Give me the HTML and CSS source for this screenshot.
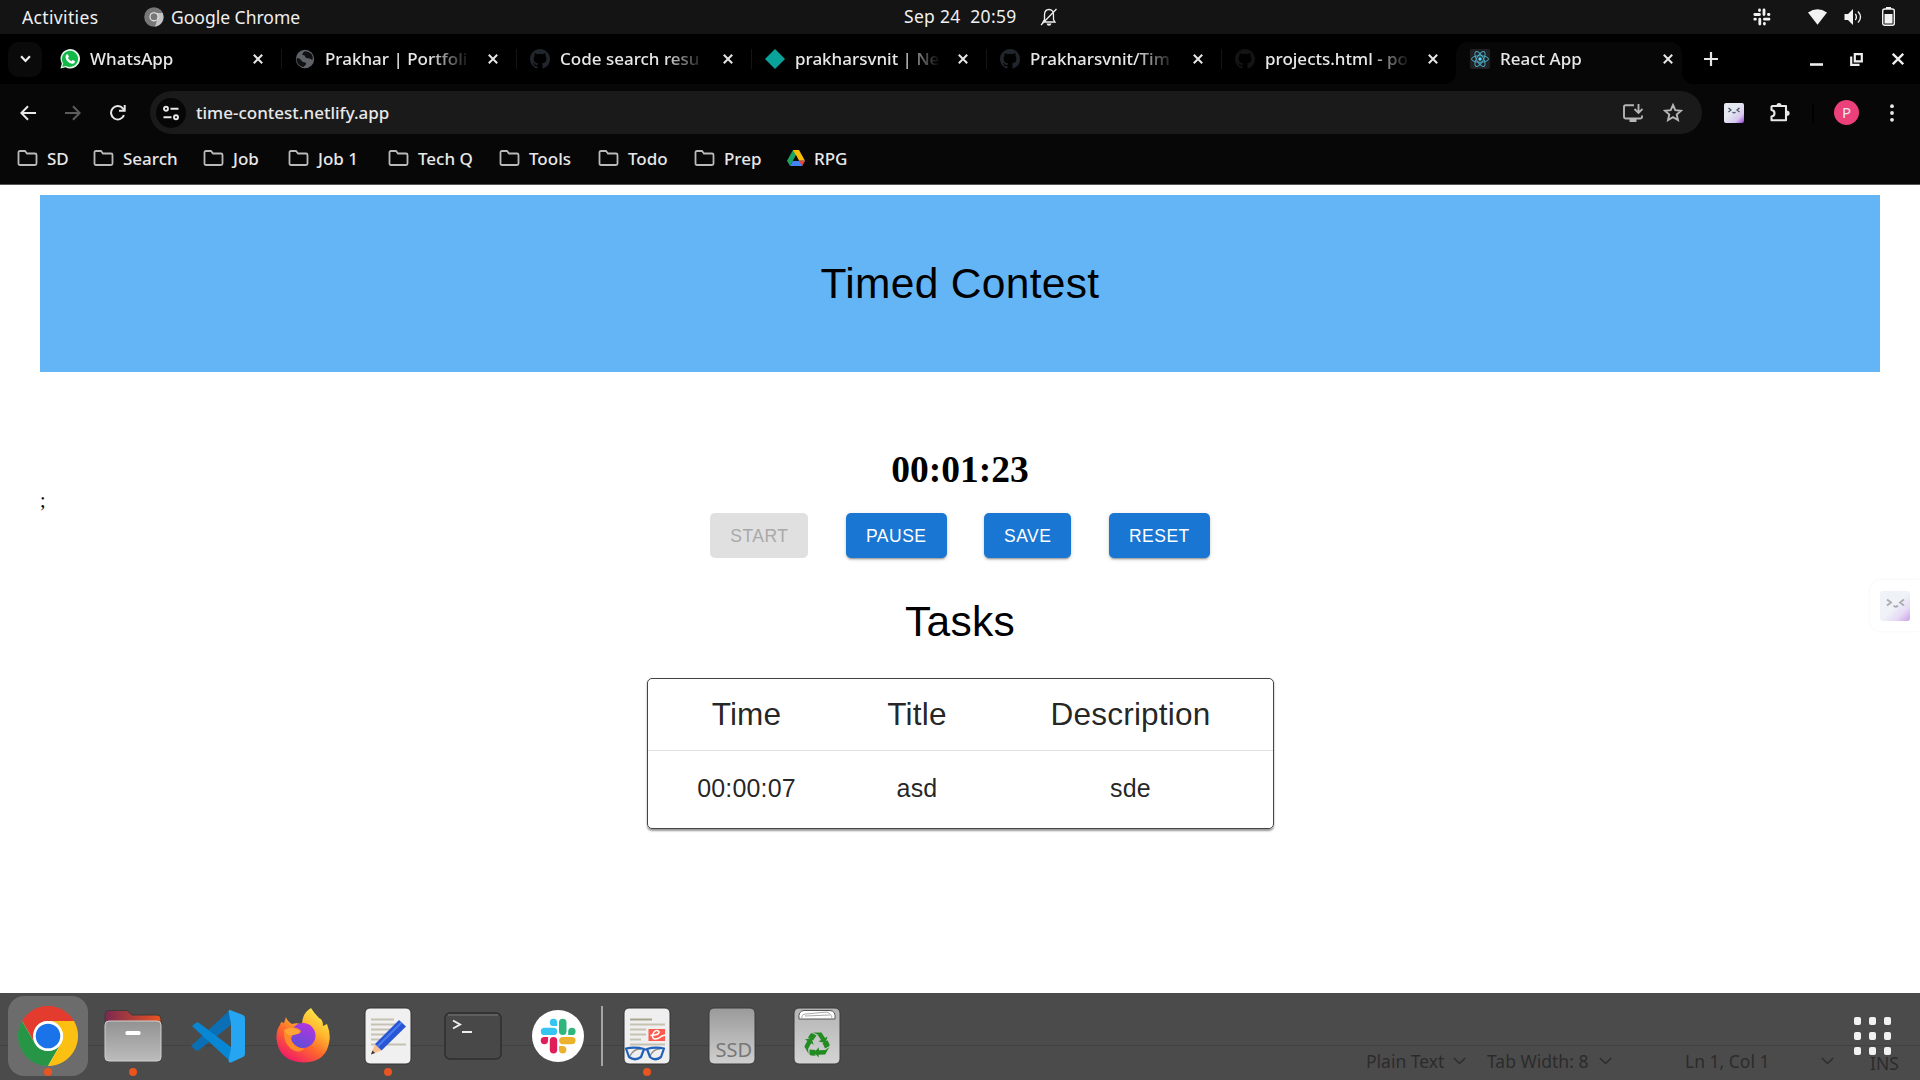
FILE: index.html
```html
<!DOCTYPE html>
<html lang="en">
<head>
<meta charset="utf-8">
<title>React App</title>
<link rel="stylesheet" href="styles.css">
</head>
<body>
<svg class="defs" width="0" height="0">
  <defs>
    <linearGradient id="g-kitty" x1="0" y1="0" x2="1" y2="1"><stop offset=".4" stop-color="#e4e9f2"/><stop offset=".75" stop-color="#d9c8ee"/><stop offset="1" stop-color="#8e3fd6"/></linearGradient>
    <linearGradient id="g-folder" x1="0" y1="0" x2="1" y2="0"><stop offset="0" stop-color="#7a2950"/><stop offset="1" stop-color="#e95420"/></linearGradient>
    <linearGradient id="g-grey" x1="0" y1="0" x2="0" y2="1"><stop offset="0" stop-color="#929292"/><stop offset="1" stop-color="#bcbcbc"/></linearGradient>
    <linearGradient id="g-ssd" x1="0" y1="0" x2="0" y2="1"><stop offset="0" stop-color="#9a9a9a"/><stop offset="1" stop-color="#d0d0d0"/></linearGradient>
    <linearGradient id="g-trash" x1="0" y1="0" x2="0" y2="1"><stop offset="0" stop-color="#b4b4b4"/><stop offset="1" stop-color="#d4d4d4"/></linearGradient>
    <linearGradient id="g-fox" x1=".85" y1="0" x2=".2" y2="1"><stop offset="0" stop-color="#fff44f"/><stop offset=".35" stop-color="#ffb52e"/><stop offset=".6" stop-color="#ff6a2b"/><stop offset="1" stop-color="#f0106f"/></linearGradient>
    <linearGradient id="g-globe" x1=".8" y1="0" x2=".3" y2="1"><stop offset="0" stop-color="#b833e1"/><stop offset="1" stop-color="#5b4fd6"/></linearGradient>
    <symbol id="close" viewBox="0 0 10 10"><path d="M.8.8 9.2 9.2M9.2.8.8 9.2" stroke="#e6e6e6" stroke-width="2" fill="none"/></symbol>
    <symbol id="folder" viewBox="0 0 20 16"><path d="M1 13V2.500Q1 1 2.500 1H7.500L9.500 3.500H17.500Q19 3.500 19 5V13.500Q19 15 17.500 15H2.500Q1 15 1 13.500Z" fill="none" stroke="#b9b9b9" stroke-width="1.800"/></symbol>
    <symbol id="github" viewBox="0 0 16 16"><path d="M8 0C3.580 0 0 3.580 0 8c0 3.540 2.290 6.530 5.470 7.590.4.070.55-.17.55-.38v-1.490c-2.230.48-2.690-.95-2.690-.95-.36-.92-.89-1.170-.89-1.170-.73-.5.050-.49.050-.49.810.060 1.230.83 1.230.83.720 1.230 1.880.87 2.340.67.070-.52.280-.87.510-1.070-1.780-.2-3.640-.89-3.640-3.950 0-.87.310-1.590.820-2.150-.080-.2-.36-1.020.080-2.120 0 0 .67-.21 2.200.82a7.600 7.600 0 0 1 4 0c1.530-1.040 2.200-.82 2.200-.82.440 1.100.160 1.920.080 2.120.510.56.820 1.270.820 2.150 0 3.070-1.870 3.750-3.650 3.950.29.250.54.730.54 1.480v2.190c0 .21.150.46.550.38A8 8 0 0 0 16 8c0-4.420-3.580-8-8-8z"/></symbol>
    <symbol id="chev" viewBox="0 0 13 8"><path d="M.8 1 6.500 6.500 12.200 1" fill="none" stroke="#2c2c2c" stroke-width="1.400"/></symbol>
    <symbol id="arrow-seg" viewBox="0 0 60 60" overflow="visible"><path d="M26 26.500H34.500L38 32 40.500 30.500 38.500 37 31.500 35.500 34 34 30.500 28.500ZM25 27 29.500 29.500 26 34.500 21 31.500 23.500 27.800Z"/></symbol>
  </defs>
</svg>

<header class="topbar">
  <span class="activities">Activities</span>
  <svg class="tb-chrome" viewBox="0 0 20 20"><circle cx="10" cy="10" r="9.800" fill="#777"/><path d="M10 6H18.500A9.800 9.800 0 0 1 11 19.700L13.500 12Z" fill="#c4c4c4"/><circle cx="10" cy="9.800" r="4.600" fill="#ededed"/><circle cx="10" cy="9.800" r="3.500" fill="#777"/></svg>
  <span class="app-name">Google Chrome</span>
  <span class="clock">Sep 24&nbsp; 20:59</span>
  <svg class="bell" viewBox="0 0 18 18"><path d="M3 14H15L13.500 11.500V7C13.500 3.500 12 1.500 9 1.500S4.500 3.500 4.500 7V11.500ZM1 17 16.500 1" fill="none" stroke="#eee" stroke-width="1.300"/><path d="M6.500 15.500h5q-.5 2.200-2.500 2.200t-2.500-2.200Z" fill="#eee"/></svg>
  <svg class="st-slack" viewBox="0 0 18 18"><g stroke="#f2f2f2" stroke-width="2.800" stroke-linecap="round"><path d="M6.500 2V2.600M1.800 6.500H6.500M11 1.800V6.500M15.400 6.500H16M11.400 11.200H16M11.400 15.500V16M6.800 11.200V16M1.800 11.200H2.400"/></g></svg>
  <svg class="st-wifi" viewBox="0 0 19 16"><path d="M0 3.500Q9.500-3 19 3.500L9.500 15.800Z" fill="#f2f2f2"/></svg>
  <svg class="st-vol" viewBox="0 0 18 18"><path d="M0 6H3.500L8.500 1V17L3.500 12H0Z" fill="#f2f2f2"/><path d="M10.800 6Q13 9 10.800 12M13.500 3.500Q18.500 9 13.500 14.500" fill="none" stroke="#f2f2f2" stroke-width="1.300"/></svg>
  <svg class="st-bat" viewBox="0 0 13 19"><rect x=".7" y="2" width="11.600" height="16.300" rx="2" fill="none" stroke="#f2f2f2" stroke-width="1.400"/><path d="M4 0H9V2H4ZM2.500 7H10.500V16.500H2.500Z" fill="#f2f2f2"/></svg>
</header>

<section class="browser">
  <div class="tabstrip">
    <div class="tab-search"><svg viewBox="0 0 10 7"><path d="M1 1 5 5.300 9 1" fill="none" stroke="#eee" stroke-width="2"/></svg></div>
    <div class="tab"><svg class="fav" viewBox="0 0 20 20"><path d="M.5 19.500 1.800 14.500A9.700 9.700 0 1 1 5.500 18.200Z" fill="#e8f7ec"/><path d="M2.200 17.800 3.200 14.300A8.100 8.100 0 1 1 6 16.900Z" fill="#12b848"/><path d="M6.500 5.500Q7.600 4.600 8.200 6L8.900 7.700 7.900 9Q9.200 11.300 11.500 12.200L12.700 11 15 12.200Q14.800 15 12 14.700 6.500 13.500 5.500 8.200 5.500 6.500 6.500 5.500Z" fill="#fff"/></svg><span class="title">WhatsApp</span><svg class="x"><use href="#close"/></svg></div>
    <div class="tab sep"><svg class="fav" viewBox="0 0 20 20"><circle cx="10" cy="10" r="9.200" fill="#5f6368"/><path d="M2 9Q5 9 6 11T10 13.500 8.500 18Q2.500 17 1.500 11ZM9 2.500Q13 1.500 16.500 5 18.500 8 17.500 11L14.500 9.500 11 9 9.500 6.500 7 5.500Z" fill="#101112"/></svg><span class="title">Prakhar | Portfoli</span><svg class="x"><use href="#close"/></svg></div>
    <div class="tab sep"><svg class="fav gh"><use href="#github"/></svg><span class="title">Code search resu</span><svg class="x"><use href="#close"/></svg></div>
    <div class="tab sep"><svg class="fav" viewBox="0 0 20 20"><path d="M10 0 20 10 10 20 0 10Z" fill="#0aa39c"/></svg><span class="title">prakharsvnit | Ne</span><svg class="x"><use href="#close"/></svg></div>
    <div class="tab sep"><svg class="fav gh"><use href="#github"/></svg><span class="title">Prakharsvnit/Tim</span><svg class="x"><use href="#close"/></svg></div>
    <div class="tab sep"><svg class="fav gh dim"><use href="#github"/></svg><span class="title">projects.html - po</span><svg class="x"><use href="#close"/></svg></div>
    <div class="tab active"><svg class="fav" viewBox="0 0 20 20"><rect width="20" height="20" rx="2" fill="#202124"/><g fill="none" stroke="#4ba9c0" stroke-width="1"><ellipse cx="10" cy="10" rx="8.500" ry="3.300"/><ellipse cx="10" cy="10" rx="8.500" ry="3.300" transform="rotate(60 10 10)"/><ellipse cx="10" cy="10" rx="8.500" ry="3.300" transform="rotate(120 10 10)"/></g><circle cx="10" cy="10" r="1.700" fill="#61dafb"/></svg><span class="title">React App</span><svg class="x"><use href="#close"/></svg></div>
    <svg class="newtab" viewBox="0 0 14 14"><path d="M7 0V14M0 7H14" stroke="#e6e6e6" stroke-width="2.200"/></svg>
    <svg class="w-min" viewBox="0 0 13 14"><path d="M0 12.500H13" stroke="#eee" stroke-width="2.600"/></svg>
    <svg class="w-max" viewBox="0 0 13 13"><path d="M4.800 1.200H11.800V8.300H4.800ZM1.200 3.500V11.800H9.500" fill="none" stroke="#eee" stroke-width="2.200"/></svg>
    <svg class="w-close" viewBox="0 0 12 12"><path d="M.8.8 11.200 11.200M11.200.8.8 11.200" stroke="#eee" stroke-width="2.300"/></svg>
  </div>

  <div class="toolbar">
    <svg class="t-back" viewBox="0 0 16 16"><path d="M16 8H1.500M8 1.200 1.400 8 8 14.800" fill="none" stroke="#e8e8e8" stroke-width="2"/></svg>
    <svg class="t-fwd" viewBox="0 0 16 16"><path d="M0 8H14.500M8 1.200 14.600 8 8 14.800" fill="none" stroke="#5c5c5c" stroke-width="2"/></svg>
    <svg class="t-reload" viewBox="0 0 16 16"><path d="M14 10.200A6.700 6.700 0 1 1 13 3.600L14.500 5.500" fill="none" stroke="#e8e8e8" stroke-width="2"/><path d="M15.700 0V6.800H9V4.800H13.700V0Z" fill="#e8e8e8"/></svg>
    <div class="omnibox">
      <div class="site-info"><svg viewBox="0 0 16 16"><g fill="none" stroke="#e8e8e8" stroke-width="1.900"><circle cx="3" cy="3.700" r="2"/><path d="M7.500 3.700H15.500M.5 12.200H8.500"/><circle cx="13" cy="12.200" r="2"/></g></svg></div>
      <span class="url">time-contest.netlify.app</span>
      <svg class="o-install" viewBox="0 0 20 18"><path d="M11 1.200H2.500Q1 1.200 1 2.700V13Q1 14.500 2.500 14.500H17.500Q19 14.500 19 13V11.500M15.500 0V8.500M11.500 5 15.500 9 19.500 5" fill="none" stroke="#b5b5b5" stroke-width="1.900"/><path d="M6.500 15H13.500V18H6.500Z" fill="#b5b5b5"/></svg>
      <svg class="o-star" viewBox="0 0 20 19"><path d="M10 2 12.300 7.200 18 7.700 13.700 11.500 15 17 10 14.100 5 17 6.300 11.500 2 7.700 7.700 7.200Z" fill="none" stroke="#b5b5b5" stroke-width="1.900"/></svg>
    </div>
    <svg class="e-kitty" viewBox="0 0 20 20"><rect width="20" height="20" rx="2" fill="url(#g-kitty)"/><path d="M4.500 5 7 7 4.500 9M15.500 5 13 7 15.500 9M8.500 9Q10 11 11.500 9" fill="none" stroke="#444c5c" stroke-width="1.200"/></svg>
    <svg class="e-puzzle" viewBox="0 0 20 20"><path d="M2.500 3.500H16V17.800H1.500V14Q4.500 13.500 4.500 10.700T1.500 7.500V4.500Q1.500 3.500 2.500 3.500Z" fill="none" stroke="#e8e8e8" stroke-width="2.100" stroke-linejoin="round"/><path d="M6.500 3Q6.500.4 9 .4T11.500 3ZM16.500 8Q19.600 8 19.600 10.700T16.500 13.300Z" fill="#e8e8e8"/></svg>
    <div class="t-sep"></div>
    <div class="avatar">P</div>
    <svg class="e-menu" viewBox="0 0 4 18"><g fill="#e8e8e8"><circle cx="2" cy="2.200" r="1.900"/><circle cx="2" cy="9" r="1.900"/><circle cx="2" cy="15.800" r="1.900"/></g></svg>
  </div>

  <nav class="bookmarks">
    <span><svg><use href="#folder"/></svg>SD</span>
    <span><svg><use href="#folder"/></svg>Search</span>
    <span><svg><use href="#folder"/></svg>Job</span>
    <span><svg><use href="#folder"/></svg>Job 1</span>
    <span><svg><use href="#folder"/></svg>Tech Q</span>
    <span><svg><use href="#folder"/></svg>Tools</span>
    <span><svg><use href="#folder"/></svg>Todo</span>
    <span><svg><use href="#folder"/></svg>Prep</span>
    <span class="rpg"><svg viewBox="0 0 18 16"><path d="M6 0H12L6 10.700 3 16 0 10.700Z" fill="#1ea362"/><path d="M6 0H12L18 10.700H12Z" fill="#fbbc04"/><path d="M3 16 6 10.700H18L15 16Z" fill="#4285f4"/><path d="M12 10.700H18L15 16Z" fill="#ea4335"/><path d="M9 5.300 12 10.700H6Z" fill="#0a0a0a"/></svg>RPG</span>
  </nav>
</section>

<main class="page">
  <div class="banner"><h1>Timed Contest</h1></div>
  <div class="timer">00:01:23</div>
  <div class="stray">;</div>
  <div class="buttons">
    <button disabled>START</button>
    <button>PAUSE</button>
    <button>SAVE</button>
    <button>RESET</button>
  </div>
  <h2>Tasks</h2>
  <div class="table">
    <div class="row head"><span>Time</span><span>Title</span><span>Description</span></div>
    <div class="row"><span>00:00:07</span><span>asd</span><span>sde</span></div>
  </div>
</main>

<aside class="side-widget"><svg viewBox="0 0 30 30"><defs><linearGradient id="g-side" x1="0" y1="0" x2="1" y2="1"><stop offset=".5" stop-color="#eff3f8"/><stop offset=".75" stop-color="#e6daf4"/><stop offset="1" stop-color="#c7a0ea"/></linearGradient></defs><rect width="30" height="30" rx="3" fill="url(#g-side)"/><path d="M7 8.500 11 11.500 7 14.500M24 8.500 20 11.500 24 14.500M13.500 14.500Q15.500 17 18 14.500" fill="none" stroke="#a9adb3" stroke-width="1.900"/></svg></aside>

<footer class="dock">
  <div class="item focus run"><svg viewBox="0 0 60 60"><circle cx="30" cy="30" r="29.500" fill="#fff"/><path d="M4 15A30 30 0 0 1 56 15H30A15 15 0 0 0 17 22.500L17 37.500Z" fill="#e33b2e"/><path d="M4 15 17 37.500A15 15 0 0 0 43 37.500L30 60A30 30 0 0 1 4 15Z" fill="#269646"/><path d="M56 15A30 30 0 0 1 30 60L43 37.500A15 15 0 0 0 30 15Z" fill="#fcc012"/><circle cx="30" cy="30" r="15" fill="#fff"/><circle cx="30" cy="30" r="12.300" fill="#1a73e8"/></svg></div>
  <div class="item run"><svg viewBox="0 0 60 60"><path d="M2 20V8Q2 4.500 6 4.500H24L29 9H54Q58 9 58 13V20Z" fill="url(#g-folder)" stroke="#3b3b3b"/><rect x="2" y="15" width="56" height="40" rx="4" fill="url(#g-grey)" stroke="#d0d0d0"/><rect x="22.500" y="25" width="15" height="4" rx="1.500" fill="#fff"/></svg></div>
  <div class="item"><svg viewBox="0 0 60 60"><path d="M42 4 3 40 8 44.500Q9.500 45 11 44L43 19Z" fill="#0a6fb4"/><path d="M43 56 4 20 8.500 16.500Q9.500 16 11 17L43 41Z" fill="#0887d4"/><path d="M42 4Q41 3.600 40.500 5L43 18V42L40.500 55Q41 57 43 56.500L55 51Q57 50 57 47.500V12.500Q57 10 55 9Z" fill="#26a6f2"/></svg></div>
  <div class="item"><svg viewBox="0 0 60 60"><path d="M38 2Q41 7 46 12Q50 13 50 20L54 18Q57.500 27 56.500 34 54 56 31 56.500 6 56 3.500 33 3 24 7 19L8 16 11 17 13 11Q14 15 19 18 25 16 29 19 29 7 38 2Z" fill="url(#g-fox)"/><circle cx="30" cy="29.500" r="12.500" fill="url(#g-globe)"/><path d="M11 24Q18 19 27 23.500L28 26Q26 28 20 29 17 32 19 36 24 43 32 42.500 26 48 18 43 10 36 11 24Z" fill="#ff8a2a"/><path d="M11 24Q18 20 25 24 28 25 26 27.500L19.500 29Q15 31 11 24Z" fill="#ffa436"/></svg></div>
  <div class="item run"><svg viewBox="0 0 60 60"><rect x="7" y="2" width="46" height="56" rx="5" fill="#f0f0f0" stroke="#333"/><path d="M13 13.500H36M13 18.500H40M13 23.500H36M13 28.500H30M13 33.500H26M13 38.500H48" stroke="#c6c2b2" stroke-width="2"/><path d="M13 48.500 17 38 23.500 44.500Z" fill="#f7c08e"/><path d="M13 48.500 14.500 44.500 17 47Z" fill="#333"/><path d="M17 38 41 14 48 20.500 23.500 44.500Z" fill="#2a55d4"/><path d="M19.500 40.500 43.500 16.500" stroke="#4c7df0" stroke-width="2"/></svg></div>
  <div class="item"><svg viewBox="0 0 60 60"><rect x="2" y="7" width="56" height="46" rx="5" fill="#484848" stroke="#2e2e2e" stroke-width="1.500"/><path d="M5 9H55" stroke="#777"/><path d="M10 14.500 17 18.500 10 22.500M19 26H29" fill="none" stroke="#eee" stroke-width="2"/></svg></div>
  <div class="item"><svg viewBox="0 0 60 60"><circle cx="30" cy="30" r="26" fill="#fff"/><path d="M16.500 21.700H25.500A3.700 3.700 0 0 1 25.500 29.100H16.500A3.700 3.700 0 0 1 16.500 21.700ZM29.200 20.100H25.500A3.700 3.700 0 1 1 29.200 16.400Z" fill="#36c5f0"/><path d="M38.500 16.400V25.300A3.700 3.700 0 0 1 31 25.300V16.400A3.700 3.700 0 0 1 38.500 16.400ZM40.200 29.100V25.300A3.700 3.700 0 1 1 43.900 29.100Z" fill="#2eb67d"/><path d="M43.900 38.300H34.900A3.700 3.700 0 0 1 34.900 30.900H43.900A3.700 3.700 0 0 1 43.900 38.300ZM31 40H34.700A3.700 3.700 0 1 1 31 43.700Z" fill="#ecb22e"/><path d="M21.800 43.800V34.600A3.700 3.700 0 0 1 29.200 34.600V43.800A3.700 3.700 0 0 1 21.800 43.800ZM20.100 30.900V34.600A3.700 3.700 0 1 1 16.400 30.900Z" fill="#e01e5a"/></svg></div>
  <div class="divider"></div>
  <div class="item run"><svg viewBox="0 0 60 60"><rect x="7" y="2" width="46" height="56" rx="5" fill="#efefef" stroke="#333"/><path d="M13 13.500H35" stroke="#a9a48f" stroke-width="2"/><path d="M13 18.500H48M13 23.500H29M13 28.500H29M13 33.500H24M13 38.500H48" stroke="#c6c2b2" stroke-width="2"/><rect x="31.500" y="23" width="16.500" height="12" fill="#fb5c4e"/><path d="M33.500 29.500Q43 29 42 25.500 38 22.500 35.500 29 35 35 42 32 45 29.500 48 29" fill="none" stroke="#fff" stroke-width="1.400"/><path d="M13 50Q17 42 24 43M33 50Q37 42 43 43" fill="none" stroke="#8d8d8d" stroke-width="1.500"/><path d="M9 42.500Q18 40.500 27 43L24 51Q18 55.500 12 51ZM47 42.500Q38 40.500 30 43L33 51Q38 55.500 44 51ZM26 43.500H31" fill="none" stroke="#2060b8" stroke-width="2.200" stroke-linejoin="round"/></svg></div>
  <div class="item"><svg viewBox="0 0 60 60"><rect x="7" y="2" width="46" height="56" rx="5" fill="url(#g-ssd)" stroke="#3a3a3a"/><text x="13.500" y="51" class="ssd">SSD</text></svg></div>
  <div class="item"><svg viewBox="0 0 60 60"><rect x="7" y="2" width="46" height="56" rx="5" fill="url(#g-trash)" stroke="#3a3a3a"/><path d="M12 13Q11 5 17 4.500H43Q49 5 48 13Z" fill="#fff" stroke="#555"/><path d="M15 13Q14 8 19 8L40 6Q45 8 45 13M18 10 43 9" fill="none" stroke="#aaa"/><g fill="#228b22"><use href="#arrow-seg" width="60" height="60"/><use href="#arrow-seg" width="60" height="60" transform="rotate(120 30 38.500)"/><use href="#arrow-seg" width="60" height="60" transform="rotate(240 30 38.500)"/></g></svg></div>
  <div class="status">
    <span class="s-plain">Plain Text</span><svg><use href="#chev"/></svg>
    <span class="s-tab">Tab Width: 8</span><svg><use href="#chev"/></svg>
    <span class="s-pos">Ln 1, Col 1</span><svg><use href="#chev"/></svg>
    <span class="s-ins">INS</span>
  </div>
  <div class="apps"><i></i><i></i><i></i><i></i><i></i><i></i><i></i><i></i><i></i></div>
</footer>
</body>
</html>
```
FILE: styles.css
```css
* { box-sizing: border-box; }
html, body { margin: 0; height: 100%; }
body {
  width: 1920px; height: 1080px; overflow: hidden;
  display: flex; flex-direction: column; position: relative;
  background: #fff; font-family: "Noto Sans", sans-serif;
}
svg { display: block; flex: none; }
.defs { position: absolute; }

/* system bar */
.topbar {
  height: 34px; flex: none; display: flex; align-items: center;
  background: #141414; color: #f0f0f0; font-size: 17.500px; white-space: nowrap; padding-bottom: 1px;
}
.activities { width: 121px; padding-left: 22px; letter-spacing: .35px; }
.tb-chrome { width: 20px; height: 20px; margin: 0 7px 0 23px; }
.app-name { width: 733px; }
.clock { width: 136px; letter-spacing: .3px; margin-top: -1px; }
.bell { width: 18px; height: 18px; }
.st-slack { width: 18px; height: 18px; margin-left: 695px; }
.st-wifi { width: 19px; height: 16px; margin-left: 37px; }
.st-vol { width: 19px; height: 18px; margin-left: 17px; }
.st-bat { width: 13px; height: 19px; margin-left: 19px; margin-top: -1px; }

/* browser chrome */
.browser { height: 151px; flex: none; background: #070707; border-bottom: 1px solid #555; color: #e8e8e8; }
.tabstrip { height: 50px; display: flex; align-items: center; background: #000; padding-left: 8px; }
.tab-search { width: 34px; height: 35px; border-radius: 11px; background: #0a0a0a; display: grid; place-items: center; margin-right: 4px; }
.tab-search svg { width: 11px; height: 8px; }
.tab { width: 235px; height: 50px; display: flex; align-items: center; padding-left: 14px; position: relative; }
.tab.sep::before { content: ""; position: absolute; left: 0; top: 15px; width: 1px; height: 20px; background: #151515; }
.fav { width: 20px; height: 20px; margin-right: 10px; }
.gh { fill: #20262c; }
.gh.dim { fill: #141414; }
.title { width: 147px; padding-bottom: 2px; font-size: 17px; font-weight: 500; white-space: nowrap; -webkit-mask-image: linear-gradient(90deg, #000 105px, transparent 146px); mask-image: linear-gradient(90deg, #000 105px, transparent 146px); }
.x { width: 10px; height: 10px; margin-left: 16px; }
.active { background: #070707; height: 42px; align-self: flex-end; border-radius: 12px 12px 0 0; width: 226px; padding-bottom: 8px; }
.active::before, .active::after { content: ""; position: absolute; bottom: 0; width: 12px; height: 12px; }
.active::before { left: -12px; background: radial-gradient(circle at 0 0, #000 12px, #070707 12.500px); }
.active::after { right: -12px; background: radial-gradient(circle at 100% 0, #000 12px, #070707 12.500px); }
.newtab { width: 14px; height: 14px; margin-left: 22px; }
.w-min { width: 13px; height: 14px; margin-left: 92px; }
.w-max { width: 13px; height: 13px; margin-left: 27px; }
.w-close { width: 12px; height: 12px; margin-left: 29px; }

.toolbar { height: 50px; padding-top: 7px; display: flex; align-items: center; }
.t-back, .t-fwd, .t-reload { width: 16px; height: 16px; }
.t-back { margin-left: 19.500px; }
.t-fwd { margin-left: 29px; }
.t-reload { margin-left: 29px; }
.omnibox { width: 1552px; height: 43px; margin-left: 24.500px; border-radius: 22px; background: #1a1a1a; display: flex; align-items: center; padding-left: 6px; }
.site-info { width: 30px; height: 30px; border-radius: 50%; background: #060606; display: grid; place-items: center; }
.site-info svg { width: 16px; height: 16px; }
.url { font-size: 17px; font-weight: 500; margin-left: 10px; width: 1427px; padding-bottom: 1px; }
.o-install { width: 20px; height: 18px; }
.o-star { width: 20px; height: 19px; margin-left: 20px; }
.e-kitty { width: 20px; height: 20px; margin-left: 22px; }
.e-puzzle { width: 20px; height: 21px; margin-left: 26px; }
.t-sep { width: 2px; height: 20px; background: #000; margin: 0 20px 0 22px; }
.avatar { width: 25px; height: 25px; border-radius: 50%; background: #ec407a; font-size: 15px; line-height: 25px; text-align: center; }
.e-menu { width: 4px; height: 18px; margin-left: 31px; }

.bookmarks { height: 50px; padding: 0 0 2px 17px; display: grid; grid-template-columns: 76px 110px 85px 100px 111px 99px 96px 93px 80px; align-items: center; font-size: 17px; font-weight: 500; white-space: nowrap; }
.bookmarks span { display: flex; align-items: center; gap: 9px; }
.bookmarks svg { width: 21px; height: 16px; }
.bookmarks .rpg svg { width: 18px; }

/* page */
.page { flex: 1; display: flex; flex-direction: column; align-items: center; padding: 10px 40px 0; font-family: "Liberation Sans", Arial, sans-serif; }
.banner { width: 1840px; height: 177px; background: #64b5f6; display: grid; place-items: center; }
h1, h2 { margin: 0; font-weight: 400; font-size: 42.500px; line-height: 52px; letter-spacing: .00735em; color: #000; }
.timer { margin-top: 76px; height: 43px; font: bold 37.500px/43px "Liberation Serif", serif; color: #000; }
.stray { align-self: flex-start; height: 21px; font: 20px/19px "Liberation Serif", serif; }
.buttons { display: flex; gap: 37.500px; margin-top: .5px; }
button { height: 45px; border: 0; padding: 1px 20px 0; border-radius: 5px; background: #1976d2; color: #fff; font: 17.500px/44px "Liberation Sans", Arial, sans-serif; letter-spacing: .02857em; box-shadow: 0 3px 1px -2px rgba(0,0,0,.2), 0 2px 2px rgba(0,0,0,.14), 0 1px 5px rgba(0,0,0,.12); }
button:disabled { background: #e0e0e0; color: #a9a9a9; box-shadow: none; }
h2 { margin-top: 38px; }
.table { width: 627px; height: 151px; margin-top: 30px; border: 1.500px solid #444; border-radius: 5px; box-shadow: 0 1.500px 2px rgba(0,0,0,.4); color: rgba(0,0,0,.87); letter-spacing: .01071em; }
.row { display: grid; grid-template-columns: 198px 143px 1fr; height: 76px; align-items: center; text-align: center; font-size: 25px; }
.row.head { height: 72px; padding-top: 1px; font-size: 31.600px; border-bottom: 1px solid #e0e0e0; }

/* floating extension button */
.side-widget { position: absolute; right: 0; top: 580px; width: 50px; height: 51px; border-radius: 10px 0 0 10px; background: #fff; box-shadow: 0 0 3px rgba(0,0,0,.06); padding: 11px 0 0 10px; }
.side-widget svg { width: 30px; height: 30px; }

/* dock */
.dock { position: relative; height: 87px; flex: none; display: flex; gap: 5px; padding: 3px 0 0 7.500px; background: linear-gradient(#414141, #414141) 0 52px / 100% 1px no-repeat #4b4b4b; }
.item { width: 80px; height: 80px; display: grid; place-items: center; border-radius: 16px; position: relative; }
.item svg { width: 60px; height: 60px; }
.focus { background: #6c6c6c; }
.run::after { content: ""; position: absolute; left: 36px; bottom: 0; width: 8px; height: 8px; border-radius: 50%; background: #e95420; }
.divider { width: 2px; height: 60px; margin: 10px -1.500px 0; background: #a5a5a5; }
.ssd { font: 20px "Noto Sans", sans-serif; fill: #777; }
.status { position: absolute; left: 1366px; top: 56px; height: 24px; display: flex; align-items: center; font-size: 17.500px; color: #2b2b2b; white-space: nowrap; }
.status svg { width: 13px; height: 8px; }
.s-plain { width: 87px; }
.s-tab { width: 112px; margin-left: 21px; }
.s-pos { width: 136px; margin-left: 73px; }
.s-ins { margin: 4px 0 0 36px; }
.apps { position: absolute; left: 1854px; top: 24px; display: grid; grid-template-columns: repeat(3, 7px); gap: 7px 8px; }
.apps i { width: 7px; height: 8px; border-radius: 2px; background: #f2f2f2; }
```
